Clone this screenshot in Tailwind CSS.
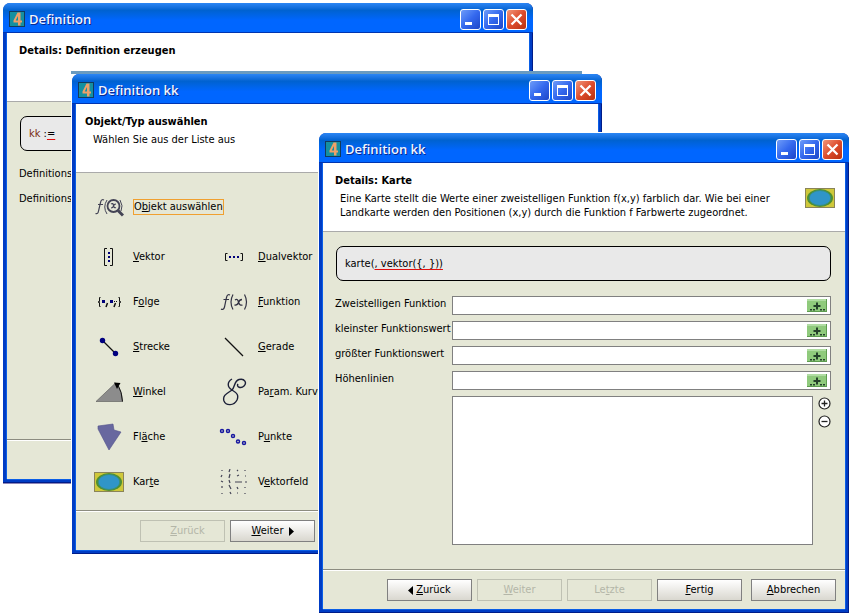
<!DOCTYPE html>
<html lang="de">
<head>
<meta charset="utf-8">
<title>Definition</title>
<script src="https://cdn.jsdelivr.net/npm/@tailwindcss/browser@4"></script>
</head>
<body class="bg-white min-h-screen relative overflow-hidden text-black text-[11px] leading-[14px] font-['DejaVu_Sans_Condensed','DejaVu_Sans',sans-serif]">

<svg class="hidden" aria-hidden="true">
  <symbol id="logo" viewBox="0 0 16 16">
    <rect x=".5" y=".5" width="15" height="15" fill="#1590a0" stroke="#123a5c"/>
    <path d="M11 1.500H8.500L4.500 9.500v2H9v3h2.500v-3H13v-2h-1.500V1.500zM9 5v4.500H6.700z" fill="#f0a068"/>
  </symbol>
  <symbol id="map" viewBox="0 0 30 20">
    <rect x=".5" y=".5" width="29" height="19" fill="#cfc83a" stroke="#8a8458"/>
    <ellipse cx="15" cy="10" rx="13" ry="9" fill="#4f8f30"/>
    <ellipse cx="15" cy="10" rx="10.800" ry="7.500" fill="#3095c8" stroke="#3a8f78"/>
  </symbol>
  <symbol id="min" viewBox="0 0 21 21"><path d="M5 13h7v3H5z" fill="#fff"/></symbol>
  <symbol id="max" viewBox="0 0 21 21"><path d="M5 5h11v11H5zM6 8v7h9V8z" fill="#fff" fill-rule="evenodd"/></symbol>
  <symbol id="close" viewBox="0 0 21 21"><path d="M5.500 5.500l10 10M15.500 5.500l-10 10" stroke="#fff" stroke-width="2.300"/></symbol>
  <symbol id="insert" viewBox="0 0 20 13">
    <rect width="20" height="13" fill="#8fca7c"/><path d="M0 0h20v2H0z" fill="#b0dca2"/><path d="M0 12.500h20M19.500 0v13" stroke="#5e9c50"/>
    <path d="M10 3.500v7M6.500 7h7" stroke="#24402a" stroke-width="2"/><path d="M3 10h2v1.500H3zM6 10h2v1.500H6zM13 10h2v1.500h-2zM16 10h2v1.500h-2z" fill="#24402a"/>
  </symbol>
</svg>

<!-- Window 1 -->
<section class="absolute left-[3px] top-[3px] w-[530px] h-[481px] flex flex-col rounded-t-[7px] bg-[#003cc4] border-b border-[#8f86b8] overflow-hidden shadow-[inset_-1px_-1px_0_#001c88]">
  <header class="h-[30px] shrink-0 flex items-center gap-[2px] px-[6px] pt-[3px] bg-linear-to-b from-[#2b86f5] via-[#0062d0] via-25% to-[#0066ff] to-60% border-b border-[#0034b0]">
    <svg class="size-4"><use href="#logo"/></svg>
    <h1 class="ml-[2px] flex-1 text-[13px] font-semibold text-[#f0f4ff] font-['Open_Sans','Noto_Sans',sans-serif] [text-shadow:1px_1px_0_#0a2a90]">Definition</h1>
    <button aria-label="Minimieren" class="size-[21px] rounded-[3px] border border-white bg-linear-to-br from-[#6f9bf8] via-[#3468ee] to-[#1e46c8]"><svg class="size-[21px] -m-px"><use href="#min"/></svg></button>
    <button aria-label="Maximieren" class="size-[21px] rounded-[3px] border border-white bg-linear-to-br from-[#6f9bf8] via-[#3468ee] to-[#1e46c8]"><svg class="size-[21px] -m-px"><use href="#max"/></svg></button>
    <button aria-label="Schließen" class="size-[21px] rounded-[3px] border border-white bg-linear-to-br from-[#f09478] via-[#dd4c2c] to-[#b83010]"><svg class="size-[21px] -m-px"><use href="#close"/></svg></button>
  </header>
  <div class="flex-1 flex flex-col mx-[4px] mb-[4px] bg-[#e5e7d6] shadow-[-1px_0_0_#0a5ee6,1px_0_0_#0a5ee6,0_1px_0_#0a5ee6]">
    <div class="h-[69px] bg-white border-b border-[#aaa] px-3 pt-[11px]"><h2 class="font-bold">Details: Definition erzeugen</h2></div>
    <div class="flex-1 px-[13px] pt-[14px]">
      <div class="h-[35px] flex items-center rounded-[7px] border border-black bg-[#e9e9e9] px-2"><span class="text-[#7a2c10]">kk</span>&nbsp;:<span class="underline decoration-[#e01010] decoration-1 underline-offset-2">=</span></div>
      <p class="mt-4 -ml-px">Definitionsbereich</p>
      <p class="mt-[11px] -ml-px">Definitionsmenge</p>
    </div>
    <footer class="h-[40px] border-t border-[#8c8c80] shadow-[inset_0_1px_0_white]"></footer>
  </div>
</section>

<!-- Window 2 -->
<div class="absolute left-[71px] top-[71px] w-[531px] h-[483px] bg-white">
  <div class="h-[3px] w-[511px] bg-[#6a9bc0]"></div>
  <section class="ml-px h-[480px] flex flex-col rounded-t-[7px] bg-[#003cc4] overflow-hidden shadow-[inset_-1px_-1px_0_#001c88]">
    <header class="h-[30px] shrink-0 flex items-center gap-[2px] px-[6px] pt-[3px] bg-linear-to-b from-[#2b86f5] via-[#0062d0] via-25% to-[#0066ff] to-60% border-b border-[#0034b0]">
      <svg class="size-4"><use href="#logo"/></svg>
      <h1 class="ml-[2px] flex-1 text-[13px] font-semibold text-[#f0f4ff] font-['Open_Sans','Noto_Sans',sans-serif] [text-shadow:1px_1px_0_#0a2a90]">Definition kk</h1>
      <button aria-label="Minimieren" class="size-[21px] rounded-[3px] border border-white bg-linear-to-br from-[#6f9bf8] via-[#3468ee] to-[#1e46c8]"><svg class="size-[21px] -m-px"><use href="#min"/></svg></button>
      <button aria-label="Maximieren" class="size-[21px] rounded-[3px] border border-white bg-linear-to-br from-[#6f9bf8] via-[#3468ee] to-[#1e46c8]"><svg class="size-[21px] -m-px"><use href="#max"/></svg></button>
      <button aria-label="Schließen" class="size-[21px] rounded-[3px] border border-white bg-linear-to-br from-[#f09478] via-[#dd4c2c] to-[#b83010]"><svg class="size-[21px] -m-px"><use href="#close"/></svg></button>
    </header>
    <div class="flex-1 flex flex-col mx-[4px] mb-[4px] bg-[#e5e7d6] shadow-[-1px_0_0_#0a5ee6,1px_0_0_#0a5ee6,0_1px_0_#0a5ee6]">
      <div class="h-[69px] bg-white border-b border-[#aaa] px-[9px] pt-[11px]"><h2 class="font-bold">Objekt/Typ auswählen</h2><p class="mt-[4px] pl-2">Wählen Sie aus der Liste aus</p></div>
      <div class="flex-1 pl-[18px] pt-[23px]">
        <button class="h-[22px] flex items-center gap-[9px]">
          <svg class="w-[30px] h-[22px]" viewBox="0 0 30 22" fill="none" stroke="#445">
            <path d="M10 4q-2.500-1.500-3.500 2.500L4.500 15Q4 18.500 1.500 17.500M4 8.500h5" stroke-width="1.200"/><path d="M13 4q-4.500 7 0 14M26 4q3.500 6 1 11"/>
            <circle cx="19.500" cy="10" r="6" stroke-width="1.800"/><path d="M24 14.500l5 5" stroke-width="3"/><path d="M17 8q2-1.500 2.500 1.500t2.500 2M22 8q-2 0-2.500 2T17 12" stroke-width="1.200"/>
          </svg>
          <span class="border border-[#f0a030] leading-[14px]">O<u>b</u>jekt auswählen</span>
        </button>
        <div class="mt-[16px] grid grid-cols-[125px_125px] auto-rows-[45px] items-center">
          <button class="flex items-center gap-[9px] whitespace-nowrap"><svg class="w-[30px] h-[26px]" viewBox="0 0 30 26" fill="none"><path d="M13 4.500h-2.500v17H13M16 4.500h2.500v17H16" stroke="#111"/><path d="M14 8h2v2h-2zM14 12h2v2h-2zM14 16h2v2h-2z" fill="#00007a"/></svg><span><u>V</u>ektor</span></button>
          <button class="flex items-center gap-[9px] whitespace-nowrap"><svg class="w-[30px] h-[26px]" viewBox="0 0 30 26" fill="none"><path d="M8.500 9.500H6.500v7h2M21.500 9.500h2v7h-2" stroke="#111"/><path d="M10 12h2v2h-2zM14 12h2v2h-2zM18 12h2v2h-2z" fill="#00007a"/></svg><span><u>D</u>ualvektor</span></button>
          <button class="flex items-center gap-[9px] whitespace-nowrap"><svg class="w-[30px] h-[26px]" viewBox="0 0 30 26" fill="none"><path d="M6.500 8.500h-1v4L4 13l1.500.5v4h1M24.500 8.500h1v4l1.500.5-1.500.5v4h-1" stroke="#111"/><path d="M8 11h3v3H8zM16 11h3v3h-3z" fill="#00007a"/><path d="M13.500 14l-1.500 4M21.500 14L20 18" stroke="#111" stroke-width="1.500"/><path d="M20 12.500h1M22 12.500h1" stroke="#111"/></svg><span>F<u>o</u>lge</span></button>
          <button class="flex items-center gap-[9px] whitespace-nowrap"><svg class="w-[30px] h-[26px]" viewBox="0 0 30 26" fill="none" stroke="#334"><path d="M11 6q-2.500-1.500-3.500 2.500L5.500 18Q4.500 21.500 2 20M4.500 10.500h5.500" stroke-width="1.200"/><path d="M14 5.500q-4 7.500 0 15M25.500 5.500q4 7.500 0 15" stroke-width="1.200"/><path d="M16 11q2.500-2 3.500 2t4 3M23 10.500q-2.500 0-3.500 3t-4 2.500" stroke-width="1.300"/></svg><span><u>F</u>unktion</span></button>
          <button class="flex items-center gap-[9px] whitespace-nowrap"><svg class="w-[30px] h-[26px]" viewBox="0 0 30 26"><path d="M8.500 6.500l13 13" stroke="#111" stroke-width="1.300"/><circle cx="8.500" cy="6.500" r="2.700" fill="#000080"/><circle cx="21.500" cy="19.500" r="2.700" fill="#000080"/></svg><span><u>S</u>trecke</span></button>
          <button class="flex items-center gap-[9px] whitespace-nowrap"><svg class="w-[30px] h-[26px]" viewBox="0 0 30 26"><path d="M6 4l18 18" stroke="#111" stroke-width="1.300"/></svg><span><u>G</u>erade</span></button>
          <button class="flex items-center gap-[9px] whitespace-nowrap"><svg class="w-[30px] h-[26px]" viewBox="0 0 30 26"><path d="M2 22.500L21.500 4q6.500 7 7 18.500z" fill="#8c8c8c" stroke="#555" stroke-width=".6"/><path d="M20 3.500l6.500.500-3.500 6z" fill="#000"/><path d="M24 6q4 7 4.500 16.500" stroke="#111" fill="none"/></svg><span><u>W</u>inkel</span></button>
          <button class="flex items-center gap-[9px] whitespace-nowrap"><svg class="w-[30px] h-[28px]" viewBox="0 0 30 28" fill="none"><path d="M13 1C8 4 8 9 13 12C18 15 20 17 18 22C15 28 7 28 5 23C3 17 9 15 13 12C16 9 15 3 20 1.500C26 0 28 5 25 8C22 11 17 9 19 6" stroke="#1c2038" stroke-width="1.400"/></svg><span>Pa<u>r</u>am. Kurve</span></button>
          <button class="flex items-center gap-[9px] whitespace-nowrap"><svg class="w-[30px] h-[28px]" viewBox="0 0 30 28"><path d="M4 3l15-2 1 6 7 2-12 18L4 6z" fill="#68689f" stroke="#50508a" stroke-width=".6"/></svg><span>Fl<u>ä</u>che</span></button>
          <button class="flex items-center gap-[9px] whitespace-nowrap"><svg class="w-[30px] h-[26px]" viewBox="0 0 30 26" fill="none" stroke="#1818a0" stroke-width="1.500"><circle cx="3" cy="7" r="1.500"/><circle cx="9" cy="7" r="1.500"/><circle cx="14" cy="12" r="1.500"/><circle cx="19" cy="17.500" r="1.500"/><circle cx="25" cy="19" r="1.500"/></svg><span>P<u>u</u>nkte</span></button>
          <button class="flex items-center gap-[9px] whitespace-nowrap"><svg class="w-[30px] h-5"><use href="#map"/></svg><span>Kar<u>t</u>e</span></button>
          <button class="flex items-center gap-[9px] whitespace-nowrap"><svg class="w-[30px] h-[26px]" viewBox="0 0 30 26" fill="none" stroke="#445" stroke-width="1.200"><path d="M3 1v1M11 0l-1 3M18 1l1 1M26 1v1M3 6l-1 2M11 5l-1 4M18 7l2-1M26 7h1M2 12l2 1M10 11l1 3M16 13h7M26 13h2M3 17v2M10 16l2 4M18 18l1 2M26 18v1M3 24v1M11 23l1 2M18 24h1M26 24v1"/></svg><span>V<u>e</u>ktorfeld</span></button>
        </div>
      </div>
      <footer class="h-[40px] flex items-start gap-[5px] pl-[64px] pt-[9px] border-t border-[#8c8c80] shadow-[inset_0_1px_0_white]">
        <button disabled class="w-[85px] h-[22px] border border-[#bfc1b3] text-[#b4b6a8] pl-[10px]"><u>Z</u>urück</button>
        <button class="w-[85px] h-[22px] border border-[#808080] bg-linear-to-b from-white to-[#d9d7cf] flex items-center justify-center gap-[5px]"><span><u>W</u>eiter</span><svg class="w-[5px] h-[9px]" viewBox="0 0 5 9"><path d="M0 0l5 4.500L0 9z"/></svg></button>
      </footer>
    </div>
  </section>
</div>

<!-- Window 3 -->
<div class="absolute left-[318px] top-[132px] w-[531px] h-[481px] bg-white pl-px pt-px">
  <section class="h-[480px] flex flex-col rounded-t-[7px] bg-[#003cc4] overflow-hidden shadow-[inset_-1px_-1px_0_#001c88]">
    <header class="h-[30px] shrink-0 flex items-center gap-[2px] px-[6px] pt-[3px] bg-linear-to-b from-[#2b86f5] via-[#0062d0] via-25% to-[#0066ff] to-60% border-b border-[#0034b0]">
      <svg class="size-4"><use href="#logo"/></svg>
      <h1 class="ml-[2px] flex-1 text-[13px] font-semibold text-[#f0f4ff] font-['Open_Sans','Noto_Sans',sans-serif] [text-shadow:1px_1px_0_#0a2a90]">Definition kk</h1>
      <button aria-label="Minimieren" class="size-[21px] rounded-[3px] border border-white bg-linear-to-br from-[#6f9bf8] via-[#3468ee] to-[#1e46c8]"><svg class="size-[21px] -m-px"><use href="#min"/></svg></button>
      <button aria-label="Maximieren" class="size-[21px] rounded-[3px] border border-white bg-linear-to-br from-[#6f9bf8] via-[#3468ee] to-[#1e46c8]"><svg class="size-[21px] -m-px"><use href="#max"/></svg></button>
      <button aria-label="Schließen" class="size-[21px] rounded-[3px] border border-white bg-linear-to-br from-[#f09478] via-[#dd4c2c] to-[#b83010]"><svg class="size-[21px] -m-px"><use href="#close"/></svg></button>
    </header>
    <div class="flex-1 flex flex-col mx-[4px] mb-[4px] bg-[#e5e7d6] shadow-[-1px_0_0_#0a5ee6,1px_0_0_#0a5ee6,0_1px_0_#0a5ee6]">
      <div class="h-[69px] bg-white border-b border-[#aaa] pl-3 pr-[10px] pt-[11px] flex justify-between">
        <div><h2 class="font-bold">Details: Karte</h2><p class="mt-[4px] pl-[5px] whitespace-nowrap">Eine Karte stellt die Werte einer zweistelligen Funktion f(x,y) farblich dar. Wie bei einer<br>Landkarte werden den Positionen (x,y) durch die Funktion f Farbwerte zugeordnet.</p></div>
        <svg class="w-[30px] h-5 mt-[14px]"><use href="#map"/></svg>
      </div>
      <form class="flex-1 pl-3 pr-[14px] pt-[14px]">
        <div class="h-[35px] ml-px mb-[15px] flex items-center rounded-[7px] border border-black bg-[#e9e9e9] px-2">karte(<span class="underline decoration-[#e01010] decoration-1 underline-offset-2 [text-decoration-skip-ink:none]">, vektor({, }))</span></div>
        <div class="grid grid-cols-[117px_1fr] auto-rows-[19px] gap-y-[6px] leading-4">
          <label for="f1" class="whitespace-nowrap">Zweistelligen Funktion</label>
          <div class="flex items-center bg-white border border-[#808080] pr-[3px]"><input id="f1" class="flex-1 h-full outline-none"><button type="button" aria-label="Einfügen" class="h-[13px]"><svg class="w-5 h-[13px]"><use href="#insert"/></svg></button></div>
          <label for="f2" class="whitespace-nowrap">kleinster Funktionswert</label>
          <div class="flex items-center bg-white border border-[#808080] pr-[3px]"><input id="f2" class="flex-1 h-full outline-none"><button type="button" aria-label="Einfügen" class="h-[13px]"><svg class="w-5 h-[13px]"><use href="#insert"/></svg></button></div>
          <label for="f3" class="whitespace-nowrap">größter Funktionswert</label>
          <div class="flex items-center bg-white border border-[#808080] pr-[3px]"><input id="f3" class="flex-1 h-full outline-none"><button type="button" aria-label="Einfügen" class="h-[13px]"><svg class="w-5 h-[13px]"><use href="#insert"/></svg></button></div>
          <label for="f4" class="whitespace-nowrap">Höhenlinien</label>
          <div class="flex items-center bg-white border border-[#808080] pr-[3px]"><input id="f4" class="flex-1 h-full outline-none"><button type="button" aria-label="Einfügen" class="h-[13px]"><svg class="w-5 h-[13px]"><use href="#insert"/></svg></button></div>
        </div>
        <div class="mt-[6px] ml-[117px] flex gap-[5px]">
          <textarea aria-label="Liste der Höhenlinien" class="flex-1 h-[149px] bg-white border border-[#808080] resize-none outline-none"></textarea>
          <div class="flex flex-col gap-[5px] pt-px">
            <button type="button" aria-label="Hinzufügen" class="size-[13px]"><svg class="size-[13px]" viewBox="0 0 13 13"><circle cx="6.500" cy="6.500" r="5.500" fill="#fff" stroke="#222" stroke-width="1.200"/><path d="M3.500 6.500h6M6.500 3.500v6" stroke="#222" stroke-width="1.300"/></svg></button>
            <button type="button" aria-label="Entfernen" class="size-[13px]"><svg class="size-[13px]" viewBox="0 0 13 13"><circle cx="6.500" cy="6.500" r="5.500" fill="#fff" stroke="#222" stroke-width="1.200"/><path d="M3.500 6.500h6" stroke="#222" stroke-width="1.300"/></svg></button>
          </div>
        </div>
      </form>
      <footer class="h-[40px] flex items-start justify-end gap-[5px] pr-[9px] pt-[9px] border-t border-[#8c8c80] shadow-[inset_0_1px_0_white]">
        <button class="w-[85px] h-[22px] border border-[#808080] bg-linear-to-b from-white to-[#d9d7cf] flex items-center justify-center gap-[3px]"><svg class="w-[5px] h-[9px]" viewBox="0 0 5 9"><path d="M5 0L0 4.500 5 9z"/></svg><span><u>Z</u>urück</span></button>
        <button disabled class="w-[85px] h-[22px] border border-[#bfc1b3] text-[#b4b6a8]"><u>W</u>eiter</button>
        <button disabled class="w-[85px] h-[22px] border border-[#bfc1b3] text-[#b4b6a8]">Le<u>t</u>zte</button>
        <button class="w-[85px] h-[22px] border border-[#808080] bg-linear-to-b from-white to-[#d9d7cf]"><u>F</u>ertig</button>
        <button class="w-[85px] h-[22px] ml-1 border border-[#808080] bg-linear-to-b from-white to-[#d9d7cf]"><u>A</u>bbrechen</button>
      </footer>
    </div>
  </section>
</div>
</body>
</html>
